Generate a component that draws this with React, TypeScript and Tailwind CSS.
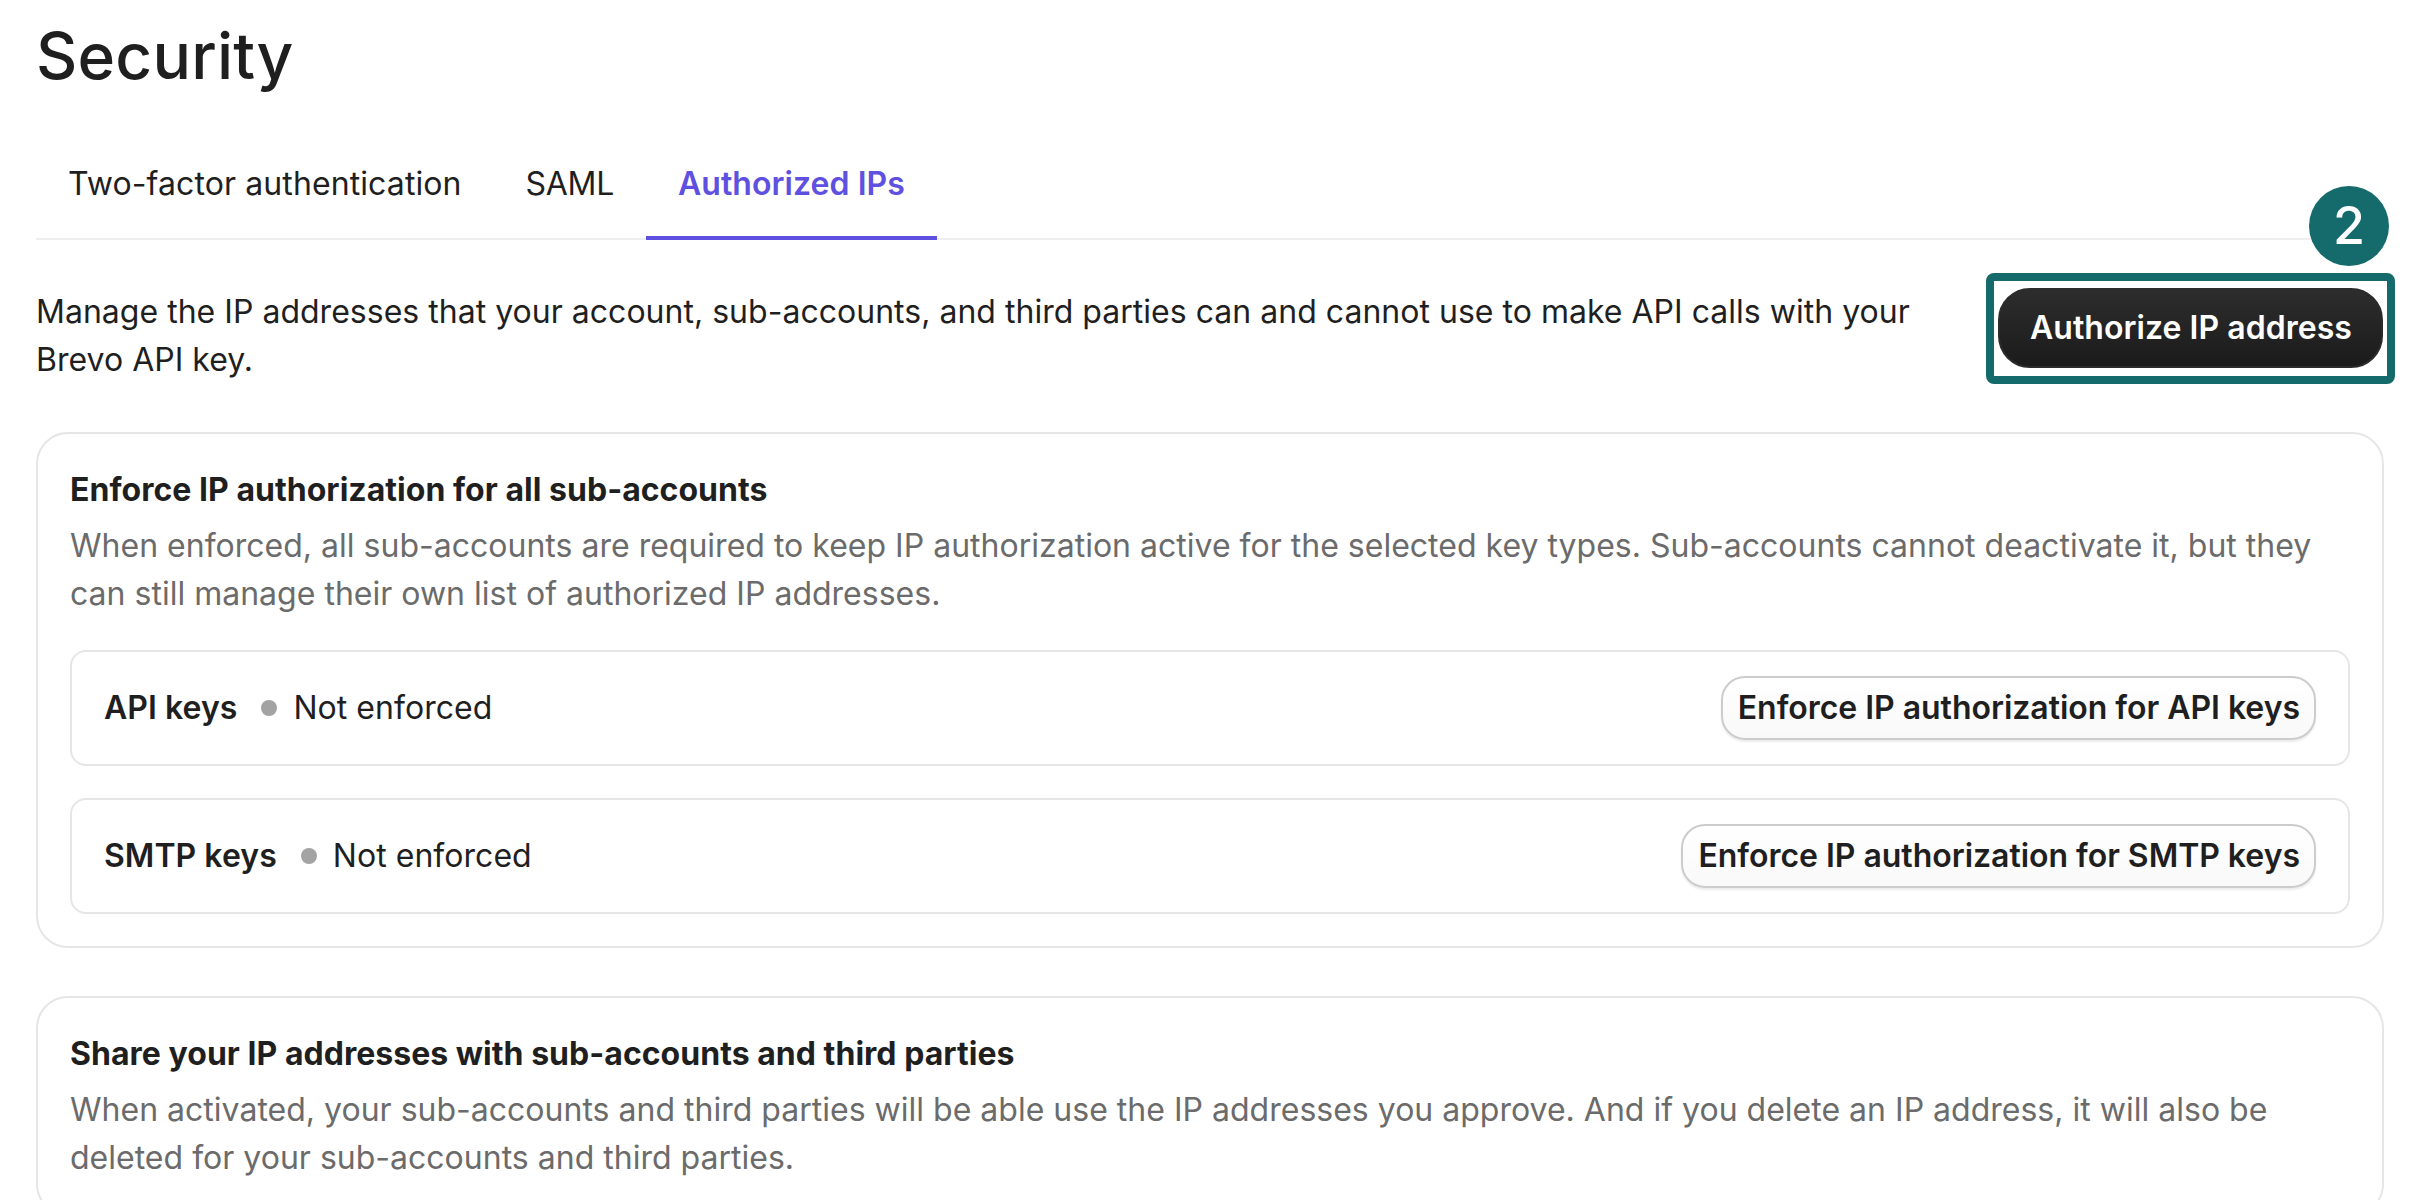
export default function App() {
  const rows = [
    { name: "API keys", action: "Enforce IP authorization for API keys" },
    { name: "SMTP keys", action: "Enforce IP authorization for SMTP keys" },
  ];
  return (
    <div className="h-[1200px] overflow-hidden bg-white pl-[36px] pr-[40px] font-['Inter',sans-serif] text-[32px] leading-[48px] tracking-[0.04px] text-[#1f1f1f]">
      <h1 className="pt-[16px] text-[64px] leading-[80px] font-medium tracking-[0.2px]">Security</h1>

      <div className="mt-[32px] flex h-[112px] border-b-[2px] border-[#efefef]">
        <div className="flex h-[112px] items-center px-[32px] tracking-[0.1px]">Two-factor authentication</div>
        <div className="flex h-[112px] items-center px-[32px] tracking-[-0.3px]">SAML</div>
        <div className="flex h-[112px] items-center border-b-[4px] border-[#5f51e0] px-[32px] pt-[4px] font-semibold text-[#5f51e0]">Authorized IPs</div>
      </div>

      <div className="mt-[48px] flex items-start justify-between">
        <p className="w-[1900px] tracking-[0.02px]">
          Manage the IP addresses that your account, sub-accounts, and third parties can and cannot use to make API calls with your Brevo API key.
        </p>
        <div className="relative mr-[1px]">
          <button className="h-[80px] w-[385px] rounded-[32px] border-[2px] border-[#2b2b2b] bg-gradient-to-b from-[#2d2d2d] to-[#1b1b1b] pl-[1px] text-center font-semibold text-white">
            Authorize IP address
          </button>
          <div className="absolute -top-[15px] -right-[12px] -bottom-[16px] -left-[12px] rounded-[8px] border-[8px] border-[#156b6b]" />
          <div className="absolute -top-[102px] -right-[6px] flex h-[80px] w-[80px] items-center justify-center rounded-full bg-[#156b6b] text-[52px] font-medium text-white">2</div>
        </div>
      </div>

      <section className="mt-[48px] rounded-[32px] border-[2px] border-[#e6e6e6] p-[32px]">
        <h2 className="font-bold tracking-[0.03px]">Enforce IP authorization for all sub-accounts</h2>
        <p className="mt-[8px] tracking-[0.01px] text-[#6b6b6b]">
          When enforced, all sub-accounts are required to keep IP authorization active for the selected key types. Sub-accounts cannot deactivate it, but they can still manage their own list of authorized IP addresses.
        </p>
        <div className="mt-[32px] flex flex-col gap-[32px]">
          {rows.map((r) => (
            <div key={r.name} className="flex items-center justify-between rounded-[16px] border-[2px] border-[#e6e6e6] px-[32px] py-[24px]">
              <div className="flex items-center">
                <span className="font-semibold">{r.name}</span>
                <span className="ml-[24px] mr-[16px] h-[16px] w-[16px] rounded-full bg-[#a3a3a3]" />
                <span>Not enforced</span>
              </div>
              <button className="h-[64px] rounded-[24px] border-[2px] border-[#cccccc] bg-gradient-to-b from-white to-[#f9f9f9] pl-[15px] pr-[14px] font-semibold tracking-[-0.03px] shadow-[0_2px_2px_rgba(0,0,0,0.08)]">
                {r.action}
              </button>
            </div>
          ))}
        </div>
      </section>

      <section className="mt-[48px] rounded-[32px] border-[2px] border-[#e6e6e6] p-[32px]">
        <h2 className="font-bold tracking-[0.03px]">Share your IP addresses with sub-accounts and third parties</h2>
        <p className="mt-[8px] tracking-[0.01px] text-[#6b6b6b]">
          When activated, your sub-accounts and third parties will be able use the IP addresses you approve. And if you delete an IP address, it will also be deleted for your sub-accounts and third parties.
        </p>
      </section>
    </div>
  );
}
